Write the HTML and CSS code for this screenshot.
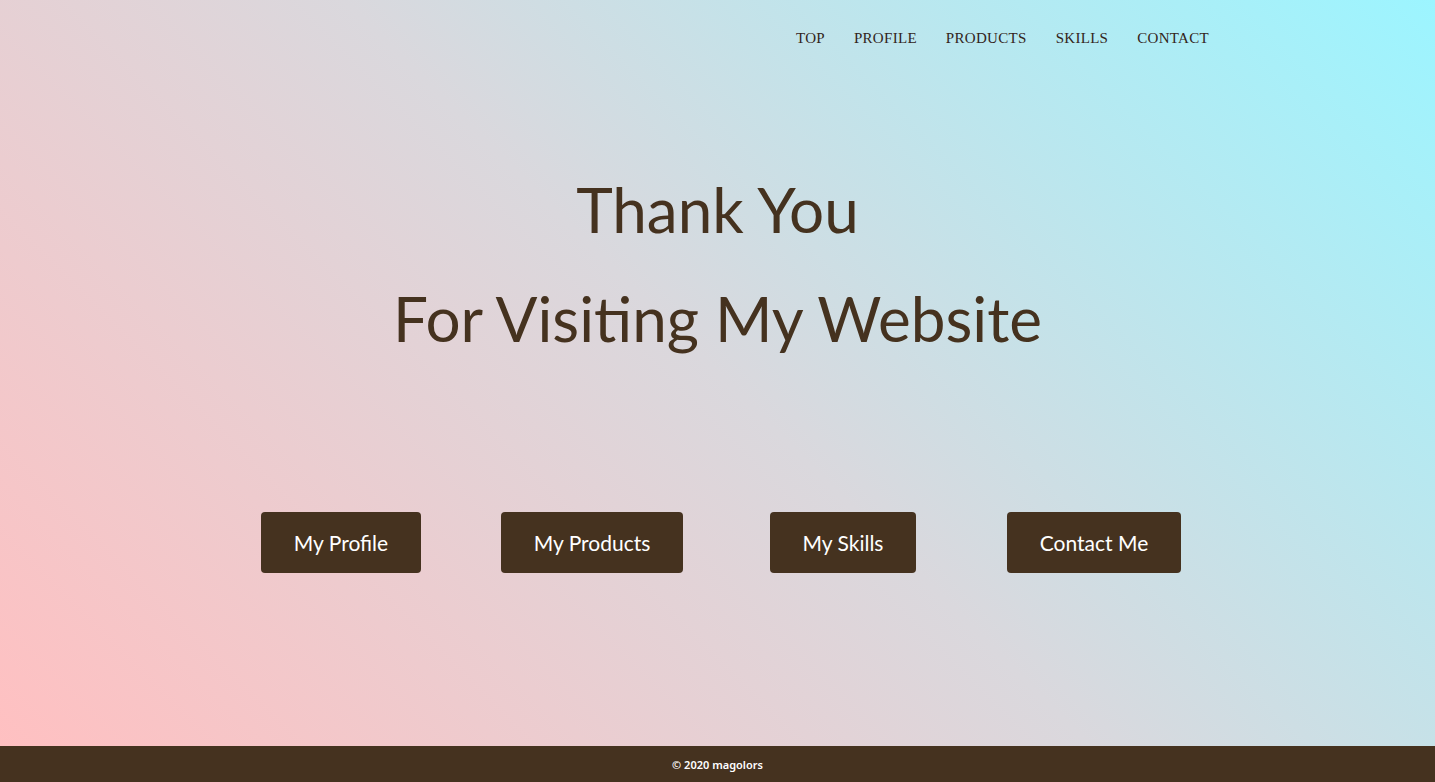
FILE: index.html
```html
<!DOCTYPE html>
<html lang="en">
<head>
<meta charset="utf-8">
<title>Thank You</title>
<link rel="stylesheet" href="styles.css">
</head>
<body>
<div class="page">
  <div class="hero">
    <header class="header">
      <nav class="nav">
        <a class="nav-link" href="#">TOP</a>
        <a class="nav-link" href="#">PROFILE</a>
        <a class="nav-link" href="#">PRODUCTS</a>
        <a class="nav-link" href="#">SKILLS</a>
        <a class="nav-link" href="#">CONTACT</a>
      </nav>
    </header>
    <main class="main">
      <h1 class="title">
        <span class="title-line">Thank You</span>
        <span class="title-line">For Visiting My Website</span>
      </h1>
      <div class="buttons">
        <a class="btn" href="#">My Profile</a>
        <a class="btn" href="#">My Products</a>
        <a class="btn" href="#">My Skills</a>
        <a class="btn" href="#">Contact Me</a>
      </div>
    </main>
  </div>
  <footer class="footer">© 2020 magolors</footer>
</div>
</body>
</html>
```
FILE: styles.css
```css
html, body {
  margin: 0;
  padding: 0;
}
body {
  color: #45321f;
}
.page {
  min-height: 100vh;
  display: flex;
  flex-direction: column;
}
.hero {
  flex: 1;
  display: flex;
  flex-direction: column;
  background: linear-gradient(45deg, #ffc0c1 0%, #dad8dd 50%, #9cf5ff 100%);
}
.header {
  display: flex;
  justify-content: flex-end;
  padding: 28px 226px 0 0;
  height: 48px;
}
.nav {
  display: flex;
  gap: 29px;
  align-items: flex-start;
}
.nav-link {
  font-family: "Liberation Serif", serif;
  font-size: 15px;
  line-height: 20px;
  color: #33241a;
  text-decoration: none;
  letter-spacing: 0.3px;
}
.main {
  flex: 1;
  display: flex;
  flex-direction: column;
  align-items: center;
}
.title {
  margin: 79px 0 0;
  display: flex;
  flex-direction: column;
  align-items: center;
  font-family: Lato, sans-serif;
  font-weight: 400;
  font-size: 62px;
  line-height: 109px;
  color: #45321f;
}
.buttons {
  margin-top: 139px;
  display: grid;
  grid-template-columns: repeat(4, 251px);
  justify-items: center;
}
.btn {
  display: flex;
  align-items: center;
  justify-content: center;
  height: 61px;
  padding: 0 33px;
  box-sizing: border-box;
  background: #45321f;
  color: #ffffff;
  border-radius: 4px;
  font-family: Lato, sans-serif;
  font-size: 21px;
  text-decoration: none;
}
.footer {
  height: 36px;
  background: #45321f;
  color: #ffffff;
  font-family: "Noto Sans", sans-serif;
  font-size: 11px;
  font-weight: 600;
  display: flex;
  align-items: center;
  justify-content: center;
}
```
